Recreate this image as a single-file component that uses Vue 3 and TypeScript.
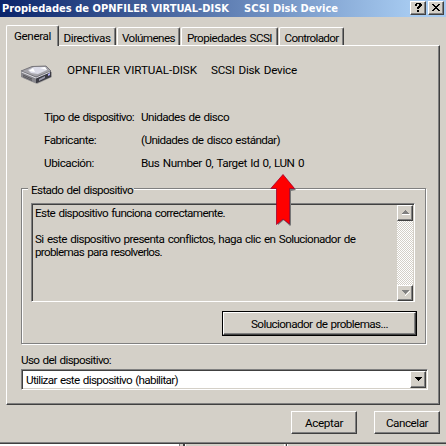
<script setup lang="ts">
import type { Directive } from 'vue'

interface Tab { label: string; width: number; text: number; active?: boolean }
interface Row { label: string; labelWidth: number; value: string; valueWidth: number }

const tabs: Tab[] = [
  { label: 'General', width: 53, text: 37, active: true },
  { label: 'Directivas', width: 57, text: 47 },
  { label: 'Volúmenes', width: 63, text: 53 },
  { label: 'Propiedades SCSI', width: 97, text: 85 },
  { label: 'Controlador', width: 65, text: 54 },
]

const rows: Row[] = [
  { label: 'Tipo de dispositivo:', labelWidth: 90, value: 'Unidades de disco', valueWidth: 88 },
  { label: 'Fabricante:', labelWidth: 52, value: '(Unidades de disco estándar)', valueWidth: 139 },
  { label: 'Ubicación:', labelWidth: 50, value: 'Bus Number 0, Target Id 0, LUN 0', valueWidth: 163 },
]

// Tracks a label out (or in) so that it fills the given number of pixels.
const vFit: Directive<HTMLElement, number> = {
  mounted(el, { value }) {
    const count = (el.textContent ?? '').length
    const natural = el.getBoundingClientRect().width
    el.style.letterSpacing = `${(value - natural) / count}px`
  },
}
</script>

<template>
  <div class="dialog">
    <header class="titlebar">
      <div class="title">
        <span v-fit="227">Propiedades de OPNFILER VIRTUAL-DISK</span>
        <span v-fit="94">SCSI Disk Device</span>
      </div>
      <button class="caption raised">
        <svg width="12" height="11" viewBox="0 0 12 11" shape-rendering="crispEdges">
          <path d="M4 1h5v1h1v2h-1v1h-1v1h-1v1h-2v-2h1v-1h1v-2h-2v2h-2v-2h1zM5 8h2v2h-2z" />
        </svg>
      </button>
      <button class="caption close raised">
        <svg width="12" height="11" viewBox="0 0 12 11" shape-rendering="crispEdges">
          <path d="M2 2h2v1h1v1h2v-1h1v-1h2v1h-1v1h-1v1h-1v1h1v1h1v1h1v1h-2v-1h-1v-1h-2v1h-1v1h-2v-1h1v-1h1v-1h1v-1h-1v-1h-1v-1h-1z" />
        </svg>
      </button>
    </header>

    <nav class="tabs">
      <div v-for="tab in tabs" :key="tab.label" class="tab" :class="{ active: tab.active }" :style="{ width: tab.width + 'px' }">
        <span v-fit="tab.text">{{ tab.label }}</span>
      </div>
    </nav>

    <main class="panel">
      <div class="device">
        <svg class="drive" width="34" height="20" viewBox="0 0 34 20">
          <path d="M3 13l14 6 15-7v-5l-12-1z" fill="#66666b" opacity=".5" />
          <path d="M1 6l15 6v6l-3-1L1 12z" fill="#88878d" />
          <path d="M16 12l15-6v6l-14 6h-1z" fill="#3c3c44" />
          <path d="M1 6L12 1.500l14-.5 5 5-15 6z" fill="#a5a4aa" stroke="#66656c" stroke-width=".8" />
          <path d="M8 5l6-3h11l2 3-9 4-7-1z" fill="#dcdce8" />
          <path d="M9 6l4-3 2 4zM20 3l5-1 2 3z" fill="#fff" />
          <path d="M1.500 7l14.500 6 14-6" fill="none" stroke="#e8e8ee" stroke-width=".9" />
          <path d="M3 10l9 4M3 11.500l9 4" stroke="#4c4b51" stroke-width=".8" />
          <path d="M19 14l6-3v2l-6 3z" fill="#9897a9" />
          <path d="M28 9l2-1v2l-2 1z" fill="#b4b0ff" />
        </svg>
        <span v-fit="130">OPNFILER VIRTUAL-DISK</span>
        <span v-fit="86" class="model">SCSI Disk Device</span>
      </div>

      <div class="facts">
        <div v-for="row in rows" :key="row.label" class="fact">
          <div class="key"><span v-fit="row.labelWidth">{{ row.label }}</span></div>
          <span v-fit="row.valueWidth">{{ row.value }}</span>
        </div>
      </div>

      <section class="group">
        <div class="legend"><span v-fit="102">Estado del dispositivo</span></div>
        <div class="status">
          <div class="message">
            <p><span v-fit="190">Este dispositivo funciona correctamente.</span></p>
            <p class="gap"><span v-fit="320">Si este dispositivo presenta conflictos, haga clic en Solucionador de</span></p>
            <p><span v-fit="127">problemas para resolverlos.</span></p>
          </div>
          <div class="scrollbar">
            <div class="step raised">
              <svg width="9" height="6" shape-rendering="crispEdges"><path d="M5 1h1v1h1v1h1v1h1v1H1V4h4z" fill="#fff" /><path d="M4 0h1v1h1v1h1v1h1v1H1V3h1V2h1V1h1z" fill="#808080" /></svg>
            </div>
            <div class="step raised">
              <svg width="9" height="6" shape-rendering="crispEdges"><path d="M8 1h1v1H8v1H7v1H6v1H5v1H4V5h1V4h1V3h1V2h1z" fill="#fff" /><path d="M1 0h7v1H7v1H6v1H5v1H4V3H3V2H2V1H1z" fill="#808080" /></svg>
            </div>
          </div>
        </div>
        <div class="default">
          <button class="push raised"><span v-fit="137">Solucionador de problemas...</span></button>
        </div>
        <svg class="arrow" width="28" height="54" viewBox="0 0 28 54">
          <path d="M14 3l12 13-5 1v34l-1 1-6-6-6 5V18z" fill="#777" />
          <path d="M13 .5L24.500 14.500H19.500V50L13 45 6.500 50.500V14.500H.8z" fill="#f00" stroke="#a00030" stroke-width=".8" />
        </svg>
      </section>

      <div class="usage"><span v-fit="90">Uso del dispositivo:</span></div>
      <div class="combo">
        <div class="choice"><span v-fit="152">Utilizar este dispositivo (habilitar)</span></div>
        <div class="drop raised">
          <svg width="7" height="5" shape-rendering="crispEdges"><path d="M0 0h7v1H6v1H5v1H4v1H3V3H2V2H1V1H0z" /></svg>
        </div>
      </div>
    </main>

    <footer class="actions">
      <button class="push raised"><span v-fit="38">Aceptar</span></button>
      <button class="push raised"><span v-fit="42">Cancelar</span></button>
    </footer>

    <div class="behind">
      <div class="sheet"></div>
      <div class="pane"></div>
      <div class="pane last"></div>
    </div>
  </div>
</template>

<style>
html, body { overflow: hidden; background: #d4d0c8; }
</style>

<style scoped>
.dialog {
  width: 446px;
  height: 446px;
  display: flex;
  flex-direction: column;
  background: #d4d0c8;
  color: #000;
  font: 11.7px/15px Roboto, "Liberation Sans", sans-serif;
  word-spacing: 1px;
  overflow: hidden;
}
.dialog * { box-sizing: border-box; }
span { white-space: pre; flex: none; display: block; width: max-content; }
p { margin: 0; height: 13px; }
svg { display: block; flex: none; }
button { margin: 0; padding: 0; font: inherit; color: inherit; border-radius: 0; word-spacing: inherit; }
.raised {
  background: #d4d0c8;
  border: 1px solid;
  border-color: #fff #404040 #404040 #fff;
  box-shadow: inset -1px -1px #808080;
}
.titlebar {
  height: 17px;
  flex: none;
  display: flex;
  align-items: flex-start;
  padding: 1px 2px 0;
  background: linear-gradient(90deg, #0a246a, #a6caf0 92%);
}
.title {
  flex: 1;
  display: flex;
  gap: 15px;
  color: #fff;
  font: bold 11px/16px "DejaVu Sans Condensed", "DejaVu Sans", sans-serif;
  word-spacing: 0;
}
.caption { width: 16px; height: 14px; display: flex; padding: 0 0 0 1px; }
.close { margin-left: 2px; }
.tabs { display: flex; height: 28px; flex: none; align-items: flex-end; padding-left: 6px; }
.tab {
  height: 18px;
  display: flex;
  justify-content: center;
  padding-top: 3px;
  border: 1px solid;
  border-width: 1px 1px 0;
  border-color: #fff #404040 #fff #fff;
  border-radius: 2px 2px 0 0;
  box-shadow: inset -1px 0 #808080;
}
.tab + .tab { margin-left: 1px; }
.tab.active + .tab { margin-left: 0; border-left: 0; }
.tab.active { height: 21px; margin-bottom: -1px; position: relative; background: #d4d0c8; padding: 3px 0 0 0; }
.panel {
  margin-left: 6px;
  width: 434px;
  height: 360px;
  flex: none;
  border: 1px solid;
  border-color: #fff #404040 #404040 #fff;
  box-shadow: inset -1px -1px #808080;
}
.device { display: flex; height: 47px; padding: 17px 0 0 13px; }
.drive { margin: 2px 13px 0 0; }
.model { margin-left: 14px; }
.facts { padding: 17px 0 0 37px; display: grid; gap: 10px; height: 95px; align-content: start; }
.fact { display: flex; height: 13px; }
.key { width: 97px; }
.group {
  position: relative;
  width: 405px;
  height: 156px;
  margin-left: 14px;
  border: 1px solid #808080;
  box-shadow: 1px 1px #fff, inset 1px 1px #fff;
}
.legend { width: 106px; height: 13px; margin: -6px 0 0 6px; padding-left: 3px; background: #d4d0c8; position: relative; }
.status {
  display: flex;
  justify-content: space-between;
  width: 384px;
  height: 99px;
  margin: 7px 0 0 9px;
  border: 1px solid;
  border-color: #808080 #fff #fff #808080;
  box-shadow: inset 1px 1px #404040;
}
.message { padding: 2px 0 0 3px; }
.gap { margin-top: 13px; }
.scrollbar {
  width: 16px;
  margin: 1px 1px 0 0;
  display: flex;
  flex-direction: column;
  justify-content: space-between;
  background: repeating-conic-gradient(#fff 0 25%, #d4d0c8 0 50%) 0 0 / 2px 2px;
}
.step { height: 16px; display: grid; place-items: center; }
.default { width: 195px; height: 25px; margin: 9px 0 0 200px; padding: 1px; background: #000; }
.default .push { width: 100%; height: 100%; }
.push { display: flex; justify-content: center; align-items: center; padding-top: 1px; }
.arrow { position: absolute; left: 248px; top: -15px; }
.usage { height: 13px; margin: 9px 0 0 14px; }
.combo {
  display: flex;
  justify-content: space-between;
  width: 407px;
  height: 21px;
  margin: 3px 0 0 14px;
  padding: 1px;
  border: 1px solid;
  border-color: #808080 #fff #fff #808080;
  box-shadow: inset 1px 1px #404040, inset -1px -1px #d4d0c8;
  background: #fff;
}
.choice { padding: 2px 0 0 3px; }
.drop { width: 16px; display: grid; place-items: center; }
.actions { display: flex; justify-content: flex-end; gap: 17px; height: 37px; flex: none; padding: 6px 6px 0 0; }
.actions .push { width: 66px; height: 23px; }
.behind { display: flex; flex: 1; border-top: 1px solid #808080; box-shadow: inset 0 1px #404040; padding-top: 1px; }
.sheet { width: 180px; background: #fff; border-right: 1px solid #808080; }
.pane { width: 102px; border: solid; border-width: 0 1px 0 2px; border-color: #404040 #fff #404040 #404040; margin-left: 3px; box-shadow: inset 1px 0 #fff; }
.last { flex: 1; border-width: 0 0 0 1px; margin-left: 1px; }
</style>
